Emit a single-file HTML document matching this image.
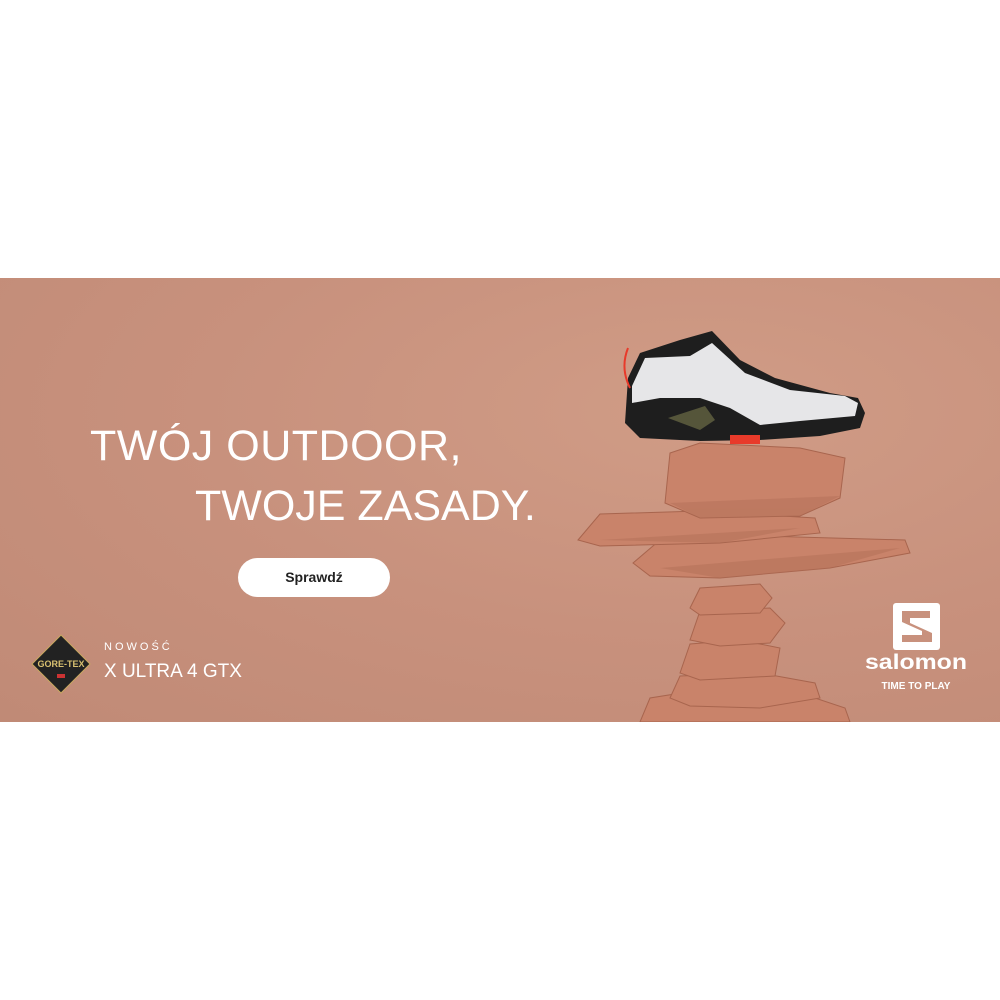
<!DOCTYPE html>
<html><head><meta charset="utf-8"><style>
html,body{margin:0;padding:0;background:#fff;width:1000px;height:1000px;overflow:hidden;font-family:"Liberation Sans",sans-serif}
.b{position:absolute;left:0;top:278px;width:1000px;height:444px;background:radial-gradient(ellipse at 70% 30%,#d09c86 0%,#c8917d 50%,#c08a76 100%);overflow:hidden}
.t{position:absolute;color:#fff;font-size:43px;letter-spacing:0.5px;white-space:nowrap}
.btn{position:absolute;left:238px;top:280px;width:152px;height:39px;border-radius:20px;background:#fff;color:#222;font-weight:bold;font-size:14px;text-align:center;line-height:39px}
</style></head><body>
<div class="b">
<div class="t" style="left:90px;top:144px">TWÓJ OUTDOOR,</div>
<div class="t" style="left:195px;top:204px;letter-spacing:0">TWOJE ZASADY.</div>
<div class="btn">Sprawdź</div>
<svg style="position:absolute;left:31px;top:356px" width="60" height="60" viewBox="0 0 60 60"><polygon points="30,1 59,30 30,59 1,30" fill="#222" stroke="#c8a860" stroke-width="1"/><text x="30" y="33" fill="#d8c070" font-size="9" font-weight="bold" text-anchor="middle" font-family="Liberation Sans">GORE-TEX</text><rect x="26" y="40" width="8" height="4" fill="#c33"/></svg>
<div style="position:absolute;left:104px;top:363px;color:#fff;font-size:11px;letter-spacing:3px">NOWOŚĆ</div>
<div style="position:absolute;left:104px;top:383px;color:#fff;font-size:19px;letter-spacing:0">X ULTRA 4 GTX</div>
<svg style="position:absolute;left:0;top:0" width="1000" height="444">
<g fill="#c9836a" stroke="#a8654e" stroke-width="1">
<polygon points="640,444 650,420 700,412 800,415 845,430 850,444"/>
<polygon points="670,420 680,398 760,395 815,405 820,420 760,430 690,428"/>
<polygon points="680,395 690,366 740,362 780,370 775,398 700,402"/>
<polygon points="690,362 700,333 770,330 785,345 770,365 720,368"/>
<polygon points="690,330 700,310 760,306 772,320 760,335 700,337"/>
<polygon points="633,285 660,262 760,258 905,262 910,275 830,290 720,300 650,298"/>
<polygon points="578,262 600,236 700,233 815,240 820,255 720,265 600,268"/>
<polygon points="665,225 670,175 700,165 800,170 845,180 840,220 800,238 700,240"/>
</g>
<g fill="#b37058" opacity=".5"><polygon points="670,225 840,218 800,238 700,240"/><polygon points="600,262 800,250 720,265"/><polygon points="660,290 900,270 830,290 720,300"/></g>
<path d="M625,145 L628,100 L640,75 L680,62 L712,53 L740,82 L775,100 L830,115 L858,120 L865,135 L860,150 L820,158 L760,162 L700,163 L640,160 Z" fill="#1e1e1e"/>
<path d="M632,108 L645,80 L690,78 L712,65 L745,95 L790,112 L845,118 L858,125 L855,138 L800,143 L760,147 L730,130 L700,120 L660,120 L632,125 Z" fill="#e6e6e8"/>
<path d="M668,140 L705,128 L715,142 L700,152 Z" fill="#55553a"/>
<rect x="730" y="157" width="30" height="9" fill="#e83a2a"/>
<path d="M628,70 Q620,90 630,110" stroke="#e83a2a" stroke-width="2" fill="none"/>
<rect x="893" y="325" width="47" height="47" rx="3" fill="#fff"/>
<path d="M902,333 L930,333 L930,340 L910,340 L910,345 L932,355 L932,364 L902,364 L902,357 L922,357 L922,353 L902,344 Z" fill="#c8917d"/>
<text x="916" y="391" fill="#fff" font-size="21" font-weight="bold" text-anchor="middle" font-family="Liberation Sans" textLength="102" lengthAdjust="spacingAndGlyphs">salomon</text>
<text x="916" y="411" fill="#fff" font-size="10" font-weight="bold" text-anchor="middle" font-family="Liberation Sans">TIME TO PLAY</text>
</svg>
</div>
</body></html>
